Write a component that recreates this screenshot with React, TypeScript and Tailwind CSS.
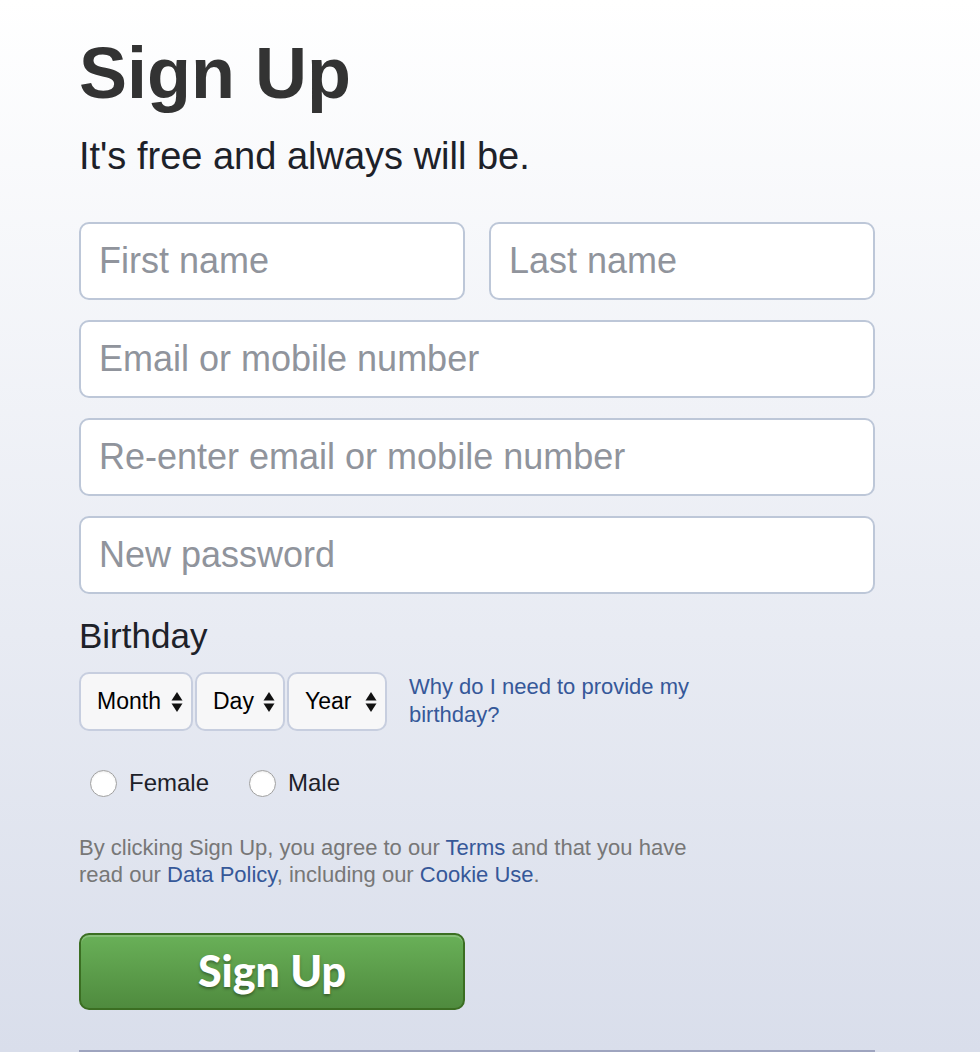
import React from 'react';

const Arrows: React.FC = () => (
    <svg width="12" height="22" viewBox="0 0 12 22" className="shrink-0">
        <path d="M6 1 L11.5 9.5 L0.5 9.5 Z" fill="#111" />
        <path d="M6 21 L11.5 12.5 L0.5 12.5 Z" fill="#111" />
    </svg>
);

const Field: React.FC<{ placeholder: string; type?: string }> = ({ placeholder, type = 'text' }) => (
    <input
        type={type}
        placeholder={placeholder}
        className="w-full h-[78px] px-[18px] bg-white border-2 border-[#bdc7d8] rounded-[10px] text-[36px] text-[#1d2129] placeholder:text-[#90949c] outline-none"
    />
);

const DateBox: React.FC<{ label: string; w: string }> = ({ label, w }) => (
    <div className={`${w} h-[59px] flex items-center justify-between pl-[16px] pr-[8px] bg-[#f7f7f8] border-2 border-[#c7cedf] rounded-[10px] text-[23px] text-black`}>
        <span>{label}</span>
        <Arrows />
    </div>
);

const Radio: React.FC<{ label: string }> = ({ label }) => (
    <label className="flex items-center gap-[12px] text-[24px] text-[#1d2129]">
        <span className="w-[27px] h-[27px] rounded-full bg-white border border-[#a0a0a0] shadow-[inset_0_1px_2px_rgba(0,0,0,0.08)]" />
        {label}
    </label>
);

export default function App() {
    return (
        <div className="min-h-[1052px] h-[1052px] overflow-hidden bg-linear-to-b from-white to-[#d9deeb] font-['Liberation_Sans',Arial,sans-serif]">
            <div className="ml-[79px] w-[796px] pt-[37px]">
                <h1 className="text-[72px] leading-none font-bold text-[#333]">Sign Up</h1>
                <p className="mt-[28px] text-[38px] leading-none text-[#1d2129]">It's free and always will be.</p>

                <div className="mt-[47px] flex flex-col gap-[20px]">
                    <div className="flex gap-[24px]">
                        <Field placeholder="First name" />
                        <Field placeholder="Last name" />
                    </div>
                    <Field placeholder="Email or mobile number" />
                    <Field placeholder="Re-enter email or mobile number" />
                    <Field placeholder="New password" type="password" />
                </div>

                <div className="mt-[24px] text-[35px] leading-none text-[#1d2129]">Birthday</div>

                <div className="mt-[19px] flex items-start">
                    <div className="flex gap-[2px]">
                        <DateBox label="Month" w="w-[114px]" />
                        <DateBox label="Day" w="w-[90px]" />
                        <DateBox label="Year" w="w-[100px]" />
                    </div>
                    <a className="ml-[22px] mt-[1px] w-[300px] text-[22px] leading-[28px] text-[#365899]">
                        Why do I need to provide my birthday?
                    </a>
                </div>

                <div className="mt-[34px] ml-[11px] flex gap-[40px]">
                    <Radio label="Female" />
                    <Radio label="Male" />
                </div>

                <p className="mt-[33px] w-[620px] text-[22px] leading-[27px] text-[#777]">
                    By clicking Sign Up, you agree to our <a className="text-[#365899]">Terms</a> and that you have read our{' '}
                    <a className="text-[#365899]">Data Policy</a>, including our <a className="text-[#365899]">Cookie Use</a>.
                </p>

                <button className="mt-[45px] w-[386px] h-[77px] rounded-[10px] border-2 border-[#3b6e22] bg-linear-to-b from-[#69b058] to-[#4f8b3e] shadow-[inset_0_2px_0_rgba(255,255,255,0.2)] text-white text-[43px] font-black font-['Lato',sans-serif] [text-shadow:0_2px_3px_rgba(0,0,0,0.35)]">
                    Sign Up
                </button>

                <div className="mt-[40px] h-[2px] bg-[#9ea4bf]" />
            </div>
        </div>
    );
}
